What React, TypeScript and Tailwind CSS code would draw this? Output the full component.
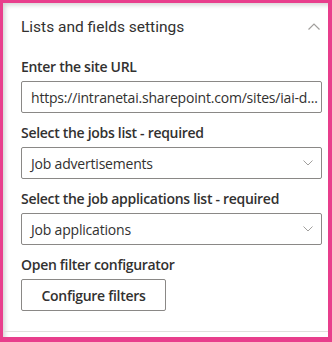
import React from "react";

const font = { fontFamily: '"Open Sans", "Noto Sans", sans-serif' };

function ChevronDown() {
  return (
    <svg width="10" height="6" viewBox="0 0 10 6" className="shrink-0">
      <polyline points="0.5,0.5 5,5 9.5,0.5" fill="none" stroke="#a19f9d" strokeWidth="1" />
    </svg>
  );
}

function ChevronUp() {
  return (
    <svg width="12" height="7" viewBox="0 0 12 7" className="shrink-0">
      <polyline points="0.5,6.5 6,1 11.5,6.5" fill="none" stroke="#a19f9d" strokeWidth="1.2" />
    </svg>
  );
}

function Label({ children }: { children: React.ReactNode }) {
  return (
    <div className="text-[14px] leading-[20px] font-semibold text-[#323130] tracking-[-0.3px]">{children}</div>
  );
}

function Dropdown({ value }: { value: string }) {
  return (
    <div className="h-[32px] border border-[#8a8886] rounded-[2px] flex items-center justify-between pl-[9px] pr-[8px] text-[14px] text-[#323130] tracking-[-0.2px]">
      <span>{value}</span>
      <ChevronDown />
    </div>
  );
}

export default function App() {
  return (
    <div
      style={font}
      className="w-[332px] h-[342px] bg-[#e83e8c] pt-[3px] pl-[3px] pr-[4px] pb-[5px]"
    >
      <div className="h-full bg-white shadow-[inset_5px_5px_5px_-3px_rgba(0,0,0,0.18)] flex flex-col">
        <div className="flex-1 pl-[18px] pr-[6px] flex flex-col">
          <div className="h-[47px] flex items-center justify-between pt-[2px] pr-[2px]">
            <span
              className="text-[15.5px] text-[#323130]"
              style={{ fontFamily: 'Roboto, "Open Sans", sans-serif' }}
            >
              Lists and fields settings
            </span>
            <span className="mb-[2px]">
              <ChevronUp />
            </span>
          </div>
          <div className="flex flex-col pt-[7px]">
            <Label>Enter the site URL</Label>
            <div className="mt-[4px] h-[32px] border border-[#8a8886] rounded-[2px] flex items-center pl-[9px] text-[14px] text-[#323130] tracking-[-0.2px] whitespace-nowrap overflow-hidden">
              https://intranetai.sharepoint.com/sites/iai-d...
            </div>
            <div className="mt-[10px]">
              <Label>Select the jobs list - required</Label>
            </div>
            <div className="mt-[4px]">
              <Dropdown value="Job advertisements" />
            </div>
            <div className="mt-[10px]">
              <Label>Select the job applications list - required</Label>
            </div>
            <div className="mt-[4px]">
              <Dropdown value="Job applications" />
            </div>
            <div className="mt-[10px]">
              <Label>Open filter configurator</Label>
            </div>
            <div className="mt-[4px]">
              <button className="w-[145px] h-[32px] border border-[#8a8886] rounded-[2px] bg-white text-[14px] font-semibold text-[#323130] tracking-[-0.3px]">
                Configure filters
              </button>
            </div>
          </div>
        </div>
        <div className="h-[1px] bg-[#e1dfdd] mb-[5px]" />
      </div>
    </div>
  );
}
